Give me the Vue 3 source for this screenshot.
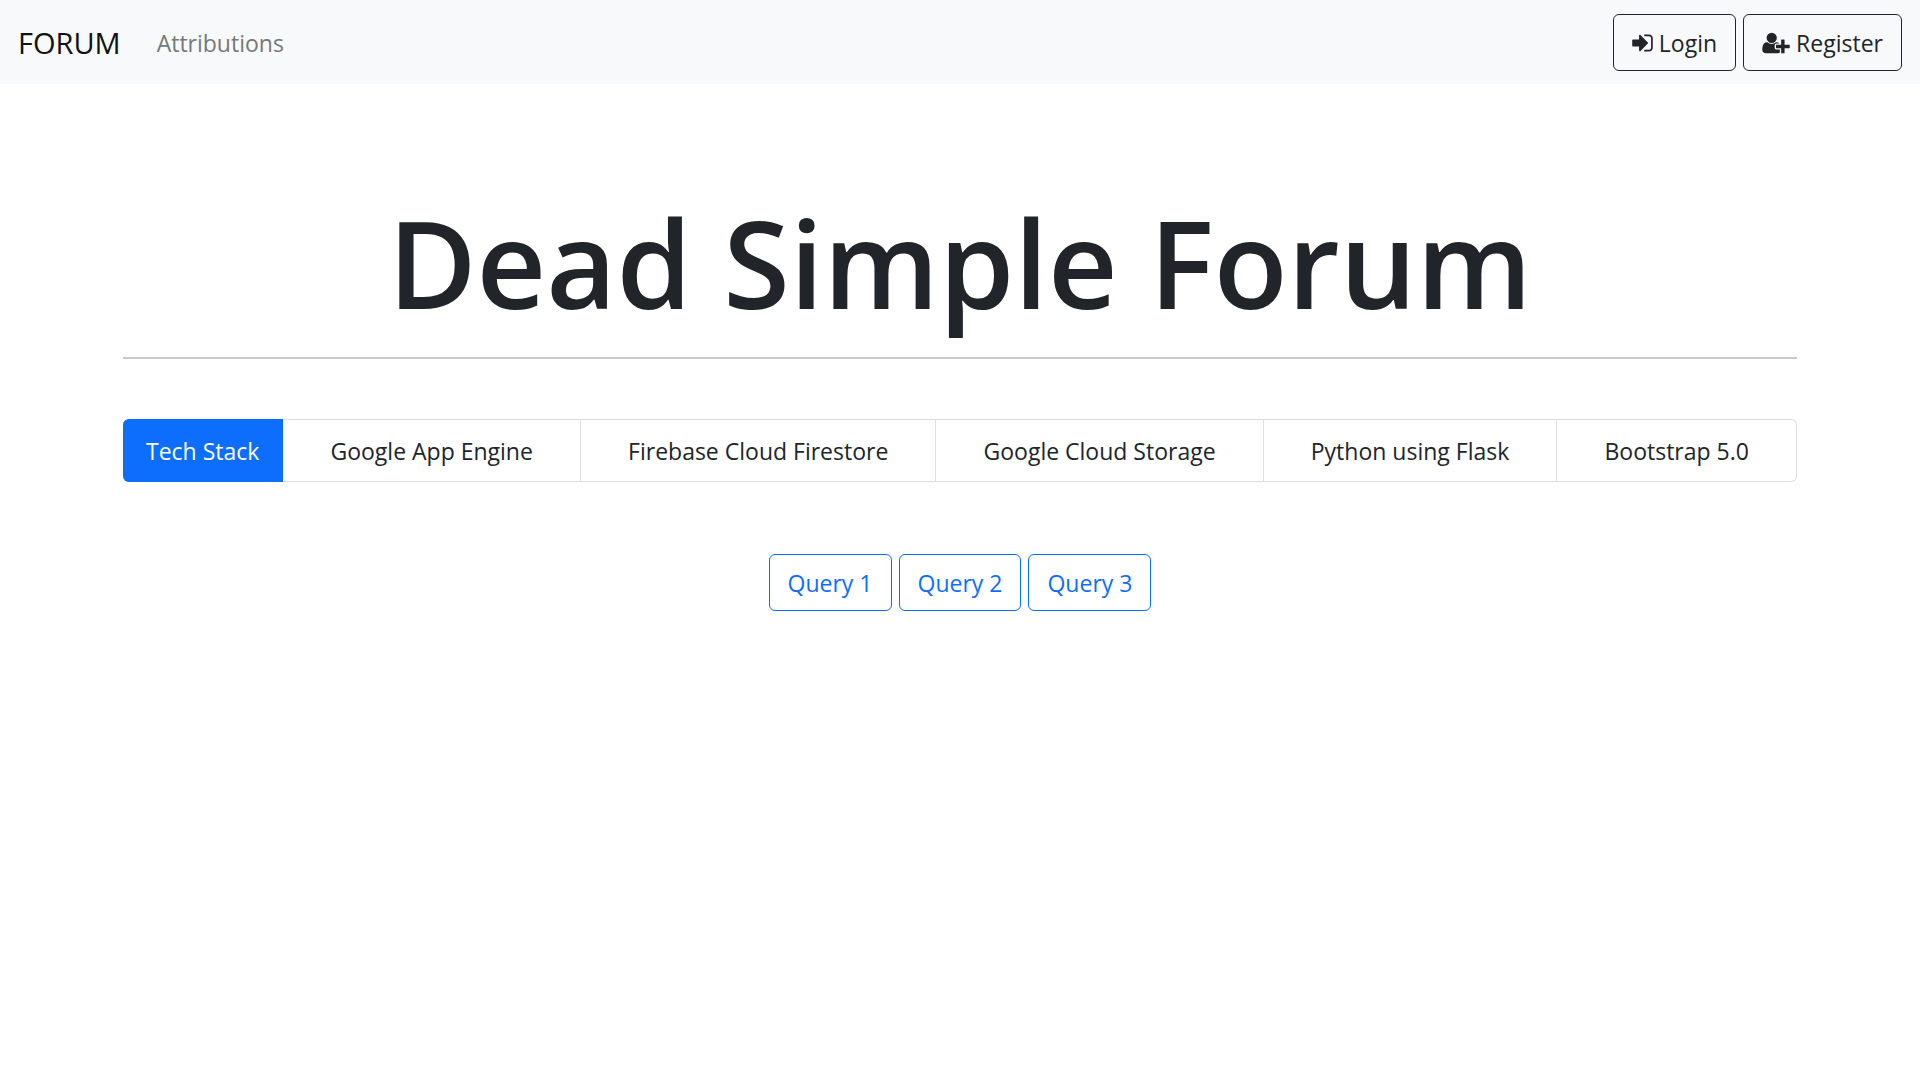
<script setup>
const stack = [
  'Google App Engine',
  'Firebase Cloud Firestore',
  'Google Cloud Storage',
  'Python using Flask',
  'Bootstrap 5.0',
]
const queries = ['Query 1', 'Query 2', 'Query 3']
</script>

<template>
  <nav class="navbar">
    <a class="brand" href="#">FORUM</a>
    <a class="nav-link" href="#">Attributions</a>
    <div class="actions">
      <button type="button" class="btn btn-dark">
        <svg class="icon icon-login" viewBox="128 0 1536 1792" aria-hidden="true">
          <path d="M1312 896q0 26-19 45l-544 544q-19 19-45 19t-45-19-19-45v-288h-448q-26 0-45-19t-19-45v-384q0-26 19-45t45-19h448v-288q0-26 19-45t45-19 45 19l544 544q19 19 19 45zm352-352v704q0 119-84.5 203.5t-203.5 84.5h-320q-13 0-22.5-9.5t-9.5-22.5q0-4-1-20t-.5-26.5 3-23.5 10-19.5 20.5-6.5h320q66 0 113-47t47-113v-704q0-66-47-113t-113-47h-312l-11.5-1-11.5-3-8-5.5-7-9-2-13.5q0-4-1-20t-.5-26.5 3-23.5 10-19.5 20.5-6.5h320q119 0 203.5 84.5t84.5 203.5z" />
        </svg>
        <span>Login</span>
      </button>
      <button type="button" class="btn btn-dark">
        <svg class="icon icon-register" viewBox="0 0 2048 1792" aria-hidden="true">
          <path d="M704 896q-159 0-271.5-112.5T320 512t112.5-271.5T704 128t271.5 112.5T1088 512 975.5 783.5 704 896zm960 128h352q13 0 22.5 9.5t9.5 22.5v192q0 13-9.5 22.5t-22.5 9.5h-352v352q0 13-9.5 22.5t-22.5 9.5h-192q-13 0-22.5-9.5t-9.5-22.5v-352h-352q-13 0-22.5-9.5t-9.5-22.5v-192q0-13 9.5-22.5t22.5-9.5h352v-352q0-13 9.5-22.5t22.5-9.5h192q13 0 22.5 9.5t9.5 22.5v352zm-736 224q0 52 38 90t90 38h256v238q-68 50-171 50h-874q-121 0-194-69t-73-190q0-53 3.5-103.5t14-109 26.5-108.5 43-97.5 62-81 85.5-53.5 111.5-20q19 0 39 17 79 61 154.5 91.5t164.5 30.5 164.5-30.5 154.5-91.5q20-17 39-17 132 0 217 96h-223q-52 0-90 38t-38 90v192z" />
        </svg>
        <span>Register</span>
      </button>
    </div>
  </nav>

  <main class="container">
    <h1 class="title">Dead Simple Forum</h1>
    <hr class="rule" />
    <ul class="stack">
      <li class="stack-item active">Tech Stack</li>
      <li v-for="item in stack" :key="item" class="stack-item fill">{{ item }}</li>
    </ul>
    <div class="queries">
      <button v-for="query in queries" :key="query" type="button" class="btn btn-primary">
        {{ query }}
      </button>
    </div>
  </main>
</template>

<style>
body {
  margin: 0;
  background: #fff;
  color: #212529;
  font-family: "Segoe UI", "Open Sans", "Noto Sans", sans-serif;
  font-size: 23px;
  line-height: 36px;
}
</style>

<style scoped>
.navbar {
  display: flex;
  align-items: center;
  box-sizing: border-box;
  min-height: 84px;
  padding: 14px 18px 13px;
  background: #f8f9fa;
}

.brand {
  margin-right: 36px;
  color: #111213;
  font-size: 29px;
  text-decoration: none;
}

.nav-link {
  color: #777879;
  text-decoration: none;
}

.actions {
  display: flex;
  gap: 7px;
  margin-left: auto;
}

.btn {
  display: inline-flex;
  align-items: center;
  justify-content: center;
  gap: 6px;
  box-sizing: border-box;
  height: 57px;
  padding: 1px 18px 0;
  border: 1px solid currentColor;
  border-radius: 6px;
  background: transparent;
  font: inherit;
  cursor: pointer;
}

.btn-dark {
  color: #212529;
}

.btn-primary {
  color: #0d6efd;
}

.icon {
  height: 24px;
  fill: currentColor;
}

.icon-login {
  width: 21px;
}

.icon-register {
  width: 28px;
}

.container {
  box-sizing: border-box;
  max-width: 1710px;
  margin: 0 auto;
  padding: 101px 18px 0;
}

.title {
  margin: 0;
  font-size: 121px;
  font-weight: 600;
  line-height: 154px;
  text-align: center;
}

.rule {
  height: 2px;
  margin: 18px 0 60px;
  border: 0;
  background: #c8c9ca;
}

.stack {
  display: flex;
  margin: 0 0 72px;
  padding: 0;
  list-style: none;
}

.stack-item {
  box-sizing: border-box;
  height: 63px;
  padding: 13px 23px;
  border: 1px solid #dfdfdf;
  border-left-width: 0;
  text-align: center;
  white-space: nowrap;
}

.stack-item.fill {
  flex: 1 1 auto;
}

.stack-item.active {
  border-color: #0d6efd;
  border-radius: 6px 0 0 6px;
  background: #0d6efd;
  color: #fff;
}

.stack-item:last-child {
  border-radius: 0 6px 6px 0;
}

.queries {
  display: flex;
  justify-content: center;
  gap: 7px;
}
</style>
